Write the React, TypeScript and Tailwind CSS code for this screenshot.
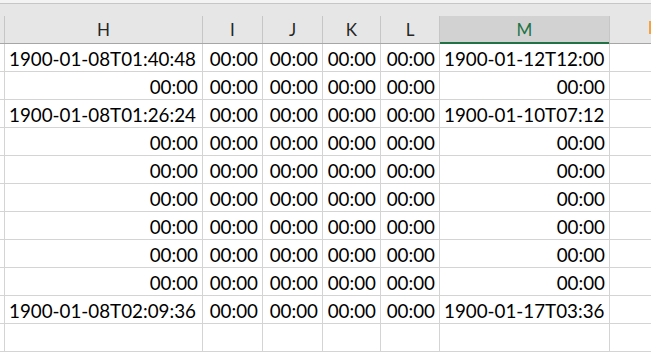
import React from 'react';

type Cell = { v: string; align: 'left' | 'right' };

const cols = ['H', 'I', 'J', 'K', 'L', 'M'];

const z: Cell = { v: '00:00', align: 'right' };
const t = (v: string): Cell => ({ v, align: 'left' });

const rows: Cell[][] = [
  [t('1900-01-08T01:40:48'), z, z, z, z, t('1900-01-12T12:00')],
  [z, z, z, z, z, z],
  [t('1900-01-08T01:26:24'), z, z, z, z, t('1900-01-10T07:12')],
  [z, z, z, z, z, z],
  [z, z, z, z, z, z],
  [z, z, z, z, z, z],
  [z, z, z, z, z, z],
  [z, z, z, z, z, z],
  [z, z, z, z, z, z],
  [t('1900-01-08T02:09:36'), z, z, z, z, t('1900-01-17T03:36')],
  [],
];

const grid = 'grid grid-cols-[5px_198px_60px_60px_58px_59px_170px_1fr]';

export default function App() {
  return (
    <div className="w-[651px] h-[353px] overflow-hidden bg-white font-['Lato','Liberation_Sans',sans-serif] text-black">
      <div className="h-[3px] bg-[#f3f3f3]" />
      <div className="h-px bg-[#c6c6c6]" />
      <div className="h-[12px] bg-[#e6e6e6]" />

      {/* column headers */}
      <div className={`${grid} h-[28px] bg-[#e6e6e6] border-b border-[#a6a6a6]`}>
        <div className="border-r border-[#c6c6c6]" />
        {cols.map((c) =>
          c === 'M' ? (
            <div
              key={c}
              className="relative flex items-center justify-center bg-[#d2d2d2] border-r border-[#c6c6c6] text-[17px] text-[#217346]"
            >
              {c}
              <div className="absolute left-0 right-0 bottom-[-1px] h-[2px] bg-[#217346]" />
            </div>
          ) : (
            <div
              key={c}
              className="flex items-center justify-center border-r border-[#c6c6c6] text-[17px] text-[#262626]"
            >
              {c}
            </div>
          )
        )}
        <div className="flex items-center justify-end">
          <div className="w-[2px] h-[13px] bg-[#f5a142] mb-[4px]" />
        </div>
      </div>

      {/* data rows */}
      {rows.map((r, i) => (
        <div key={i} className={`${grid} h-[28px]`}>
          <div className="border-r border-b border-[#d4d4d4]" />
          {cols.map((_, j) => {
            const cell = r[j];
            return (
              <div
                key={j}
                className={`flex items-center pt-[3px] border-r border-b border-[#d4d4d4] text-[18.8px] whitespace-nowrap overflow-hidden ${
                  cell?.align === 'left' ? 'justify-start pl-[4px]' : 'justify-end pr-[4px]'
                }`}
              >
                {cell?.v}
              </div>
            );
          })}
          <div className="border-b border-[#d4d4d4]" />
        </div>
      ))}
    </div>
  );
}
